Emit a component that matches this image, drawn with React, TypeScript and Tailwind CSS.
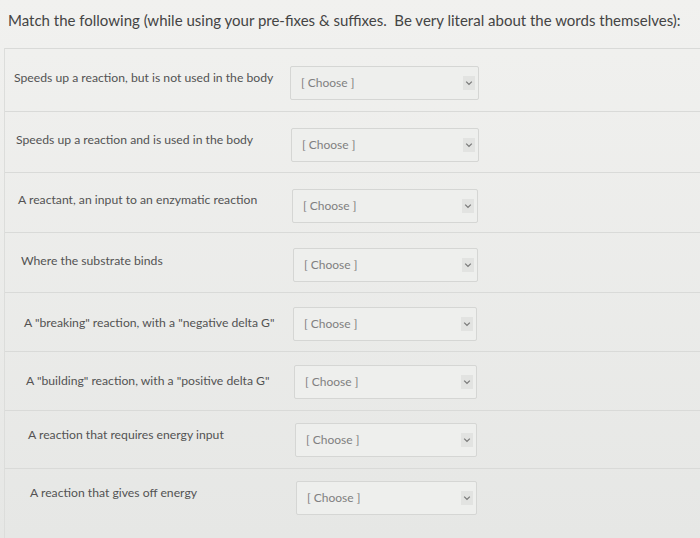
import React from "react";

const rows = [
  { label: "Speeds up a reaction, but is not used in the body", h: "h-[63px]", pl: "pl-[9px]", sel: "ml-[285px] w-[189px] mt-[17px]", lt: "pt-[21px]" },
  { label: "Speeds up a reaction and is used in the body", h: "h-[61px]", pl: "pl-[11px]", sel: "ml-[286px] w-[188px] mt-[16px]", lt: "pt-[20px]" },
  { label: "A reactant, an input to an enzymatic reaction", h: "h-[60px]", pl: "pl-[13px]", sel: "ml-[287px] w-[186px] mt-[16px]", lt: "pt-[19px]" },
  { label: "Where the substrate binds", h: "h-[60px]", pl: "pl-[16px]", sel: "ml-[288px] w-[185px] mt-[15px]", lt: "pt-[20px]" },
  { label: 'A "breaking" reaction, with a "negative delta G"', h: "h-[59px]", pl: "pl-[19px]", sel: "ml-[288px] w-[184px] mt-[14px]", lt: "pt-[22px]" },
  { label: 'A "building" reaction, with a "positive delta G"', h: "h-[59px]", pl: "pl-[21px]", sel: "ml-[289px] w-[183px] mt-[13px]", lt: "pt-[21px]" },
  { label: "A reaction that requires energy input", h: "h-[58px]", pl: "pl-[23px]", sel: "ml-[290px] w-[182px] mt-[12px]", lt: "pt-[16px]" },
  { label: "A reaction that gives off energy", h: "h-[70px]", pl: "pl-[25px]", sel: "ml-[291px] w-[181px] mt-[12px]", lt: "pt-[16px]" },
];

const Chevron = () => (
  <span className="flex h-[14px] w-[12px] items-center justify-center bg-[#e2e3e1]">
    <svg width="8" height="6" viewBox="0 0 8 6" fill="none">
      <path d="M1.2 1.6 4 4.4 6.8 1.6" stroke="#7a7a7a" strokeWidth="1.3" />
    </svg>
  </span>
);

export default function App() {
  return (
    <div className="h-[538px] w-[700px] overflow-hidden bg-linear-to-b from-[#f1f1ef] to-[#e6e7e5] font-['Lato',sans-serif]">
      <div className="h-[48px] pl-[8px] pt-[9px] text-[15px] text-[#444444]">
        Match the following (while using your pre-fixes &amp; suffixes.&nbsp; Be very literal about the words themselves):
      </div>
      <div className="ml-[4px] border-l border-[#dcdddb]">
        {rows.map((r, i) => (
          <div key={i} className={`relative ${r.h} border-t border-[#d9dad8]`}>
            <div className={`absolute left-0 top-0 ${r.pl} ${r.lt} text-[12.2px] leading-[16px] text-[#535353]`}>
              {r.label}
            </div>
            <div
              className={`${r.sel} flex h-[34px] items-center justify-between rounded-[2px] border border-[#d5d6d4] bg-[#eeefed] pl-[10px] pr-[3px] text-[12px] text-[#808080]`}
            >
              <span>[ Choose ]</span>
              <Chevron />
            </div>
          </div>
        ))}
      </div>
    </div>
  );
}
